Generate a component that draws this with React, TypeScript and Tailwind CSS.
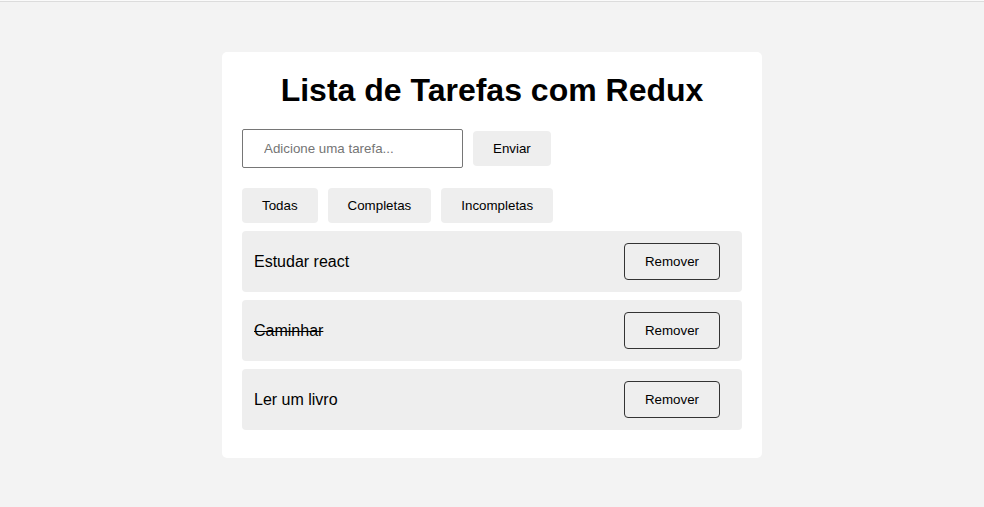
import { useState } from "react";

type Tarefa = { id: number; texto: string; completa: boolean };

const filtros = ["Todas", "Completas", "Incompletas"];

export default function App() {
  const [tarefas, setTarefas] = useState<Tarefa[]>([
    { id: 1, texto: "Estudar react", completa: false },
    { id: 2, texto: "Caminhar", completa: true },
    { id: 3, texto: "Ler um livro", completa: false },
  ]);
  const [texto, setTexto] = useState("");

  const adicionar = () => {
    if (!texto.trim()) return;
    setTarefas((t) => [...t, { id: Date.now(), texto, completa: false }]);
    setTexto("");
  };

  return (
    <div className="min-h-screen bg-[#f3f3f3] font-['Liberation_Sans',Arial,sans-serif] text-black">
      <div className="h-px bg-[#fafafa]" />
      <div className="h-px bg-[#dcdcdc]" />
      <div className="pt-[50px] flex justify-center">
        <div className="w-[540px] bg-white rounded-[5px] px-5 pt-5 pb-7">
          <h1 className="text-[32px] leading-[normal] font-bold text-center mb-5">
            Lista de Tarefas com Redux
          </h1>

          <div className="flex items-center gap-[10px]">
            <input
              value={texto}
              onChange={(e) => setTexto(e.target.value)}
              placeholder="Adicione uma tarefa..."
              className="w-[221px] h-[39px] border border-[#767676] rounded-[2px] pl-[21px] pr-2 text-[13.33px] placeholder:text-[#757575] outline-none"
            />
            <button
              onClick={adicionar}
              className="h-[35px] px-5 bg-[#eeeeee] rounded-[4px] text-[13.33px]"
            >
              Enviar
            </button>
          </div>

          <div className="flex gap-[10px] mt-5">
            {filtros.map((f) => (
              <button
                key={f}
                className="h-[35px] px-5 bg-[#eeeeee] rounded-[4px] text-[13.33px]"
              >
                {f}
              </button>
            ))}
          </div>

          <ul className="mt-2 flex flex-col gap-2">
            {tarefas.map((t) => (
              <li
                key={t.id}
                className="flex items-center justify-between bg-[#eeeeee] rounded-[4px] pl-3 pr-[22px] py-3"
              >
                <span className={`text-base ${t.completa ? "line-through" : ""}`}>
                  {t.texto}
                </span>
                <button
                  onClick={() => setTarefas((all) => all.filter((x) => x.id !== t.id))}
                  className="h-[37px] px-5 border border-[#333] rounded-[4px] text-[13.33px]"
                >
                  Remover
                </button>
              </li>
            ))}
          </ul>
        </div>
      </div>
    </div>
  );
}
